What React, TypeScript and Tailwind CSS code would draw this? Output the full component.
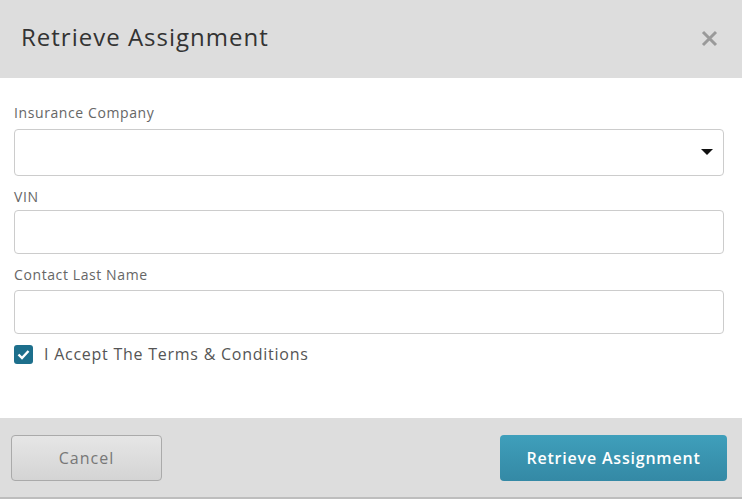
import React from "react";

export default function App() {
  return (
    <div className="w-[742px] h-[499px] bg-white flex flex-col overflow-hidden" style={{ fontFamily: '"Open Sans", sans-serif' }}>
      <div className="h-[78px] bg-[#dddddd] flex items-center justify-between pl-[21px] pr-[24px] pb-[4px] shrink-0">
        <div className="text-[24px] text-[#333333] leading-none tracking-[1px]">Retrieve Assignment</div>
        <svg width="17" height="17" viewBox="0 0 17 17" className="mt-[2px]">
          <path d="M2 2 L15 15 M15 2 L2 15" stroke="#9a9a9a" strokeWidth="3" strokeLinecap="butt" />
        </svg>
      </div>
      <div className="flex-1 flex flex-col px-[14px] pt-[26px]">
        <label className="text-[14px] text-[#666666] leading-[18px] tracking-[0.6px]">Insurance Company</label>
        <div className="mt-[7px] h-[47px] border border-[#cccccc] rounded-[4px] flex items-center justify-end pr-[10px] w-[710px]">
          <svg width="12" height="7" viewBox="0 0 12 7">
            <path d="M0 0 L12 0 L6 6 Z" fill="#111111" />
          </svg>
        </div>
        <label className="mt-[12px] text-[14px] text-[#666666] leading-[18px] tracking-[0.6px]">VIN</label>
        <div className="mt-[4px] h-[44px] border border-[#cccccc] rounded-[4px] w-[710px]" />
        <label className="mt-[12px] text-[14px] text-[#666666] leading-[18px] tracking-[0.6px]">Contact Last Name</label>
        <div className="mt-[6px] h-[44px] border border-[#cccccc] rounded-[4px] w-[710px]" />
        <div className="mt-[10px] flex items-center">
          <div className="w-[19px] h-[19px] rounded-[3px] bg-[#1d6f8c] flex items-center justify-center">
            <svg width="13" height="11" viewBox="0 0 13 11">
              <path d="M1.5 5.5 L5 9 L11.5 2" stroke="white" strokeWidth="2.4" fill="none" />
            </svg>
          </div>
          <span className="ml-[11px] text-[16px] text-[#555555] leading-[20px] tracking-[0.75px]">I Accept The Terms &amp; Conditions</span>
        </div>
      </div>
      <div className="h-[81px] bg-[#dddddd] border-b-2 border-[#bdbdbd] flex items-center justify-between pl-[11px] pr-[15px] shrink-0">
        <button className="w-[151px] h-[46px] rounded-[4px] border border-[#aaaaaa] bg-gradient-to-b from-[#e6e6e6] to-[#d4d4d4] text-[16px] text-[#777777] tracking-[1px]">Cancel</button>
        <button className="w-[227px] h-[46px] rounded-[4px] bg-gradient-to-b from-[#3f9fbb] to-[#3489a5] text-[16px] font-semibold text-white tracking-[0.8px]">Retrieve Assignment</button>
      </div>
    </div>
  );
}
